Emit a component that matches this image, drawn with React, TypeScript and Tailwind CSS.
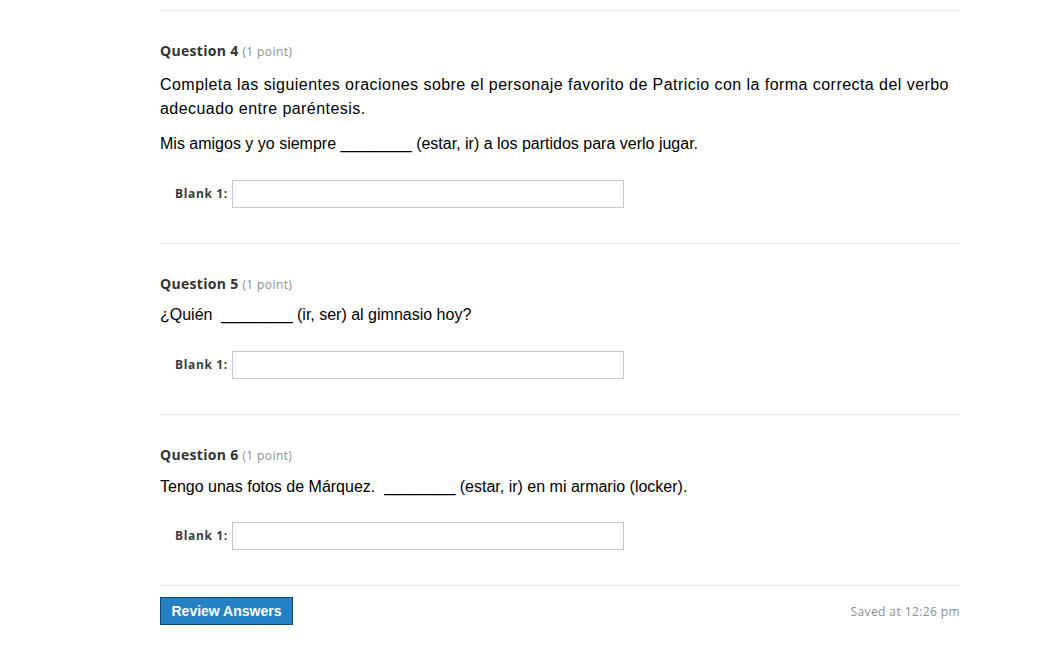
type Question = {
  n: number;
  body: { text: string; cls: string }[];
  inputGap: string;
};

const questions: Question[] = [
  {
    n: 4,
    body: [
      {
        text: "Completa las siguientes oraciones sobre el personaje favorito de Patricio con la forma correcta del verbo adecuado entre paréntesis.",
        cls: "mt-[11px] tracking-[0.45px]",
      },
      {
        text: "Mis amigos y yo siempre ________ (estar, ir) a los partidos para verlo jugar.",
        cls: "mt-[11px]",
      },
    ],
    inputGap: "mt-[24px]",
  },
  {
    n: 5,
    body: [{ text: "¿Quién  ________ (ir, ser) al gimnasio hoy?", cls: "mt-[8px]" }],
    inputGap: "mt-[24px]",
  },
  {
    n: 6,
    body: [
      {
        text: "Tengo unas fotos de Márquez.  ________ (estar, ir) en mi armario (locker).",
        cls: "mt-[9px]",
      },
    ],
    inputGap: "mt-[23px]",
  },
];

export default function App() {
  return (
    <div className="bg-white h-[666px] w-[1064px] overflow-hidden">
      <div className="ml-[160px] w-[800px] pt-[10px]">
        {questions.map((q) => (
          <section key={q.n} className="border-t border-[#e6e6e6] pt-[30px] pb-[35px]">
            <h3 className="font-['Open_Sans',sans-serif] text-[14px] leading-[20px] font-bold text-[#333333] tracking-[0.3px]">
              Question {q.n}{" "}
              <span className="font-normal text-[12px] text-[#8f8f8f] tracking-[0.4px]">(1 point)</span>
            </h3>
            <div className="font-['Liberation_Sans',Arial,sans-serif] text-[16px] leading-[24px] text-black">
              {q.body.map((p, i) => (
                <p key={i} className={`whitespace-pre-wrap ${p.cls}`}>
                  {p.text}
                </p>
              ))}
            </div>
            <div className={`${q.inputGap} flex items-center pl-[15px]`}>
              <label className="font-['Open_Sans',sans-serif] text-[12px] font-bold text-[#3b3b3b] mr-[4px] tracking-[0.65px]">
                Blank 1:
              </label>
              <input
                type="text"
                className="w-[392px] h-[28px] border border-[#c8c8c8] bg-white outline-none px-2"
              />
            </div>
          </section>
        ))}
        <div className="border-t border-[#e6e6e6] pt-[11px] flex items-center justify-between">
          <button className="h-[28px] w-[133px] bg-[#2381c4] border border-[#0e4a73] text-white font-['Liberation_Sans',Arial,sans-serif] font-bold text-[14px]">
            Review Answers
          </button>
          <span className="font-['Open_Sans',sans-serif] text-[12px] text-[#8b8f96] mt-[1px] tracking-[0.4px]">
            Saved at 12:26 pm
          </span>
        </div>
      </div>
    </div>
  );
}
